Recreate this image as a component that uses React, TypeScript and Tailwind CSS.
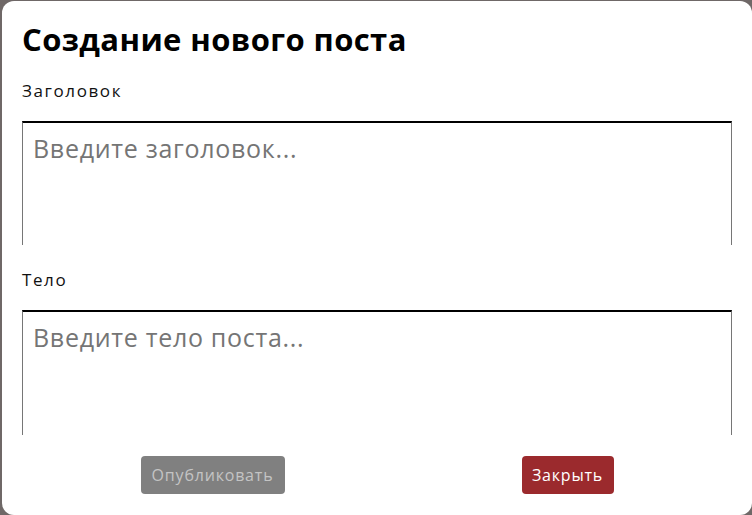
export default function App() {
  return (
    <div className="w-[752px] h-[515px] overflow-hidden bg-[#6f6867] pl-[2px] pt-[1px] font-['Open_Sans',sans-serif]">
      <div className="w-[750px] h-[514px] rounded-[12px] bg-white px-5 pt-[18px] flex flex-col">
        <h2 className="text-[31px] leading-[40px] font-bold tracking-[0.4px] text-black">Создание нового поста</h2>

        <label className="mt-[20px] text-[17px] leading-[24px] tracking-[1.6px] text-[#111]">Заголовок</label>
        <div className="mt-[18px] h-[124px] overflow-hidden">
          <textarea
            className="block w-full h-[200px] resize-none border-x border-[#767676] border-t-2 border-t-black p-[10px] text-[25px] leading-[30px] tracking-[0.7px] outline-none placeholder:text-[#757575]"
            placeholder="Введите заголовок..."
          />
        </div>

        <label className="mt-[23px] text-[17px] leading-[24px] tracking-[1.6px] text-[#111]">Тело</label>
        <div className="mt-[18px] h-[125px] overflow-hidden">
          <textarea
            className="block w-full h-[200px] resize-none border-x border-[#767676] border-t-2 border-t-black p-[10px] text-[25px] leading-[30px] tracking-[0.7px] outline-none placeholder:text-[#757575]"
            placeholder="Введите тело поста..."
          />
        </div>

        <div className="mt-[21px] flex justify-around">
          <button className="h-[38px] w-[144px] rounded-[4px] bg-[#808080] text-[16px] tracking-[0.8px] text-[#c4c4c4]">
            Опубликовать
          </button>
          <button className="h-[38px] w-[92px] rounded-[4px] bg-[#9b2a2d] text-[16px] tracking-[0.8px] text-white">
            Закрыть
          </button>
        </div>
      </div>
    </div>
  );
}
